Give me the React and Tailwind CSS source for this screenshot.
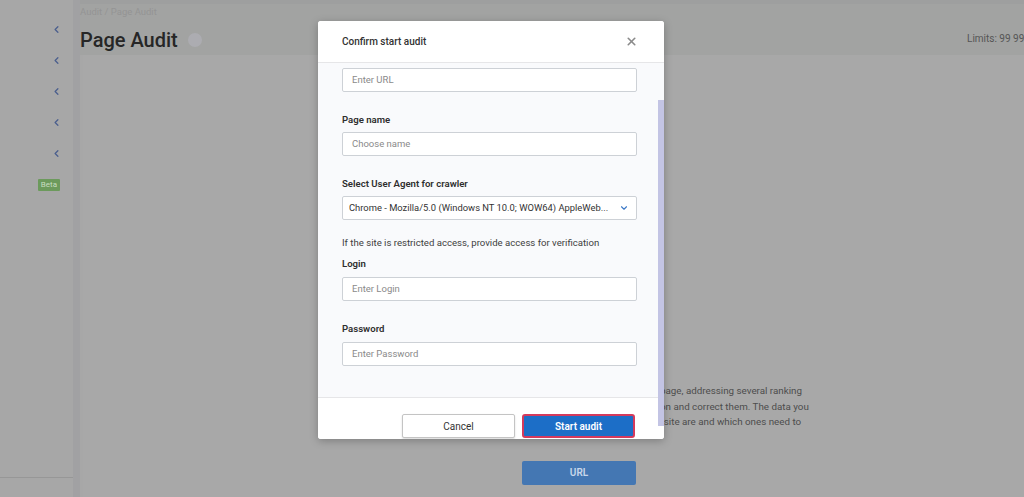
import React from "react";
import { ChevronLeft, ChevronDown, X } from "lucide-react";

function Field({ placeholder }) {
  return (
    <div className="h-[24px] border border-[#cdd1d6] bg-white rounded-[2px] px-[9px] flex items-center text-[9.5px] text-[#8a8a8a]">
      {placeholder}
    </div>
  );
}

function Label({ children, className = "" }) {
  return (
    <div className={"text-[9.6px] leading-[12px] font-semibold text-[#2e2e2e] " + className}>
      {children}
    </div>
  );
}

export default function App() {
  const chevrons = [0, 1, 2, 3, 4];
  return (
    <div
      className="relative w-[1024px] h-[497px] overflow-hidden flex bg-[#a7a7a7]"
      style={{ fontFamily: "Roboto, 'Liberation Sans', sans-serif" }}
    >
      {/* Sidebar */}
      <aside className="w-[73px] h-full flex flex-col bg-[#a7a7a7]">
        <div className="flex flex-col items-end pr-[11px] pt-[24px] gap-[20px]">
          {chevrons.map((i) => (
            <ChevronLeft key={i} size={11} strokeWidth={2.8} className="text-[#4b5f8e]" />
          ))}
        </div>
        <div className="flex justify-end pr-[13px] mt-[20px]">
          <span className="bg-[#6c9a5c] text-[#c7dcc0] text-[8px] leading-[12px] px-[3px] rounded-[1px]">Beta</span>
        </div>
        <div className="flex-1" />
        <div className="h-px bg-[#979797] mb-[19px]" />
      </aside>
      <div className="w-[7px] h-full bg-[#a1a1a3]" />

      {/* Main */}
      <main className="flex-1 h-full flex flex-col">
        <div className="h-[4px] bg-[#9e9f9f]" />
        <header className="h-[51px] bg-[#a2a3a2] flex justify-between">
          <div className="flex flex-col">
            <div className="text-[9.5px] leading-[12px] text-[#949494] mt-[2px]">Audit / Page Audit</div>
            <div className="flex items-center gap-[10px] mt-[10px]">
              <h1 className="text-[20px] leading-[24px] font-medium text-[#262626]">Page Audit</h1>
              <span className="w-[14px] h-[14px] rounded-full bg-[#acacb1]" />
            </div>
          </div>
          <div className="text-[10px] text-[#555] whitespace-nowrap mt-[27px] w-[57px] overflow-hidden">Limits: 99 998</div>
        </header>
        <section className="flex-1 bg-[#a8a8a8] ml-[3px] pt-[328px]">
          <div className="ml-[577px] text-[9.8px] leading-[15.5px] text-[#4d4d4d] whitespace-nowrap">
            <div>page, addressing several ranking</div>
            <div>on and correct them. The data you</div>
            <div className="-ml-[2px]">r site are and which ones need to</div>
          </div>
          <div className="ml-[439px] mt-[31px] w-[114px] h-[24px] bg-[#4477b3] rounded-[2px] flex items-center justify-center text-[10px] font-semibold text-[#c9d7ea]">
            URL
          </div>
        </section>
      </main>

      {/* Modal */}
      <div className="absolute left-[318px] top-[21px] w-[346px] h-[418px] bg-white rounded-[3px] shadow-[0_2px_8px_rgba(0,0,0,0.25)] flex flex-col overflow-hidden">
        <div className="h-[42px] shrink-0 flex items-center justify-between pl-6 pr-[26px] border-b border-[#e6e6e8] bg-white">
          <span className="text-[10px] font-medium text-[#333]">Confirm start audit</span>
          <X size={13} strokeWidth={3} className="text-[#8a8a8a]" />
        </div>
        <div className="flex-1 bg-[#f9fafc] pl-6 pr-[27px] pt-[5px]">
          <Field placeholder="Enter URL" />
          <Label className="mt-[22px] mb-[6px]">Page name</Label>
          <Field placeholder="Choose name" />
          <Label className="mt-[22px] mb-[6px]">Select User Agent for crawler</Label>
          <div className="h-[24px] border border-[#cdd1d6] bg-white rounded-[2px] pl-[6px] pr-[7px] flex items-center justify-between text-[9.4px] text-[#333]">
            <span className="whitespace-nowrap overflow-hidden">Chrome - Mozilla/5.0 (Windows NT 10.0; WOW64) AppleWeb...</span>
            <ChevronDown size={10} strokeWidth={2.6} className="text-[#3b78c6] shrink-0" />
          </div>
          <div className="mt-[17px] text-[9.6px] leading-[12px] text-[#3e3e3e]">
            If the site is restricted access, provide access for verification
          </div>
          <Label className="mt-[9px] mb-[7px]">Login</Label>
          <Field placeholder="Enter Login" />
          <Label className="mt-[22px] mb-[7px]">Password</Label>
          <Field placeholder="Enter Password" />
        </div>
        <div className="h-[42px] shrink-0 border-t border-[#e6e6e8] bg-white flex justify-end items-start gap-[7px] pt-[16px] pr-[29px]">
          <button className="w-[113px] h-[24px] bg-white border border-[#c4c4c4] rounded-[2px] shadow-[0_1px_2px_rgba(0,0,0,0.15)] text-[10px] text-[#333]">
            Cancel
          </button>
          <button className="w-[113px] h-[24px] bg-[#1c6ec7] border-2 border-[#d43a5c] rounded-[3px] text-[10px] font-semibold text-white">
            Start audit
          </button>
        </div>
        <div className="absolute right-0 top-[79px] w-[6px] h-[326px] bg-[#c3c4e4]" />
      </div>
    </div>
  );
}
